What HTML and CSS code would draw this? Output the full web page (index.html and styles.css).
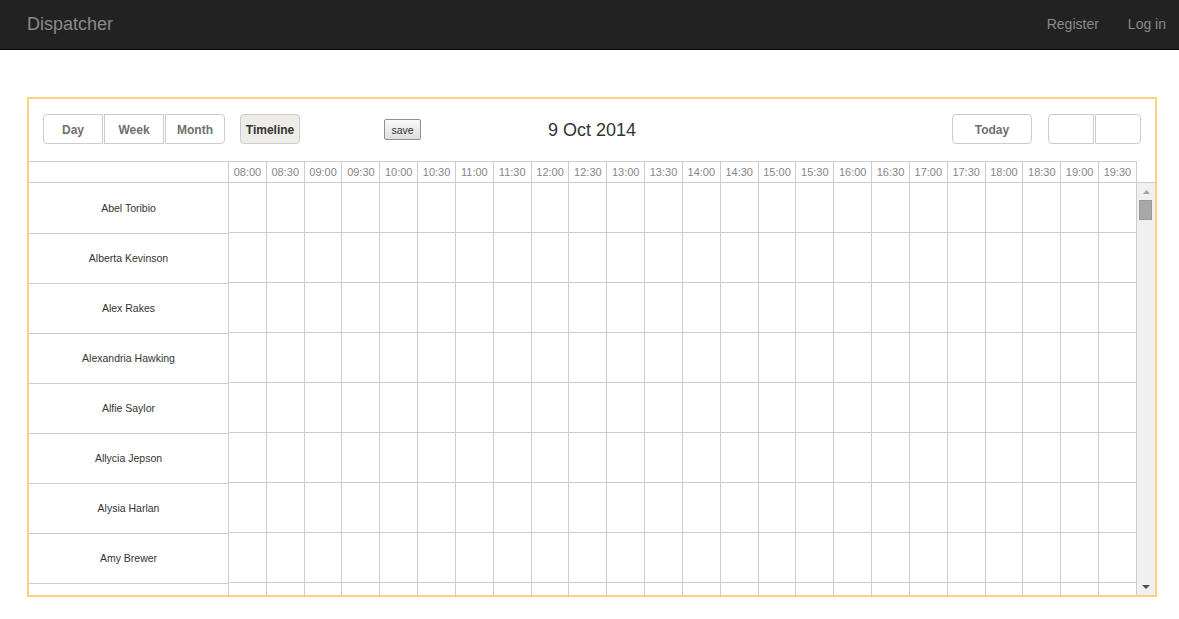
FILE: index.html
```html
<!DOCTYPE html>
<html>
<head>
<meta charset="utf-8">
<title>Dispatcher</title>
<link rel="stylesheet" href="styles.css">
</head>
<body>
<nav class="navbar">
  <a class="brand">Dispatcher</a>
  <div class="nav-links">
    <a>Register</a>
    <a>Log in</a>
  </div>
</nav>
<main class="page">
  <section class="sched">
    <div class="toolbar">
      <div class="tb-left">
        <div class="btn-group">
          <button class="btn first">Day</button>
          <button class="btn">Week</button>
          <button class="btn last">Month</button>
        </div>
        <button class="btn solo active">Timeline</button>
        <button class="save">save</button>
      </div>
      <div class="date">9 Oct 2014</div>
      <div class="tb-right">
        <button class="btn solo today">Today</button>
        <div class="btn-group">
          <button class="btn first nav"></button>
          <button class="btn last nav"></button>
        </div>
      </div>
    </div>
    <div class="tl-header">
      <div class="hdr">
        <div class="hdr-left"></div>
        <div class="hc">08:00</div><div class="hc">08:30</div><div class="hc">09:00</div><div class="hc">09:30</div>
        <div class="hc">10:00</div><div class="hc">10:30</div><div class="hc">11:00</div><div class="hc">11:30</div>
        <div class="hc">12:00</div><div class="hc">12:30</div><div class="hc">13:00</div><div class="hc">13:30</div>
        <div class="hc">14:00</div><div class="hc">14:30</div><div class="hc">15:00</div><div class="hc">15:30</div>
        <div class="hc">16:00</div><div class="hc">16:30</div><div class="hc">17:00</div><div class="hc">17:30</div>
        <div class="hc">18:00</div><div class="hc">18:30</div><div class="hc">19:00</div><div class="hc last">19:30</div>
      </div>
      <div class="hdr-gap"></div>
    </div>
    <div class="tl-body">
      <div class="names">
        <div class="name">Abel Toribio</div>
        <div class="name">Alberta Kevinson</div>
        <div class="name">Alex Rakes</div>
        <div class="name">Alexandria Hawking</div>
        <div class="name">Alfie Saylor</div>
        <div class="name">Allycia Jepson</div>
        <div class="name">Alysia Harlan</div>
        <div class="name">Amy Brewer</div>
        <div class="name"></div>
      </div>
      <div class="grid">
        <div class="col"></div><div class="col"></div><div class="col"></div><div class="col"></div>
        <div class="col"></div><div class="col"></div><div class="col"></div><div class="col"></div>
        <div class="col"></div><div class="col"></div><div class="col"></div><div class="col"></div>
        <div class="col"></div><div class="col"></div><div class="col"></div><div class="col"></div>
        <div class="col"></div><div class="col"></div><div class="col"></div><div class="col"></div>
        <div class="col"></div><div class="col"></div><div class="col"></div><div class="col"></div>
      </div>
      <div class="scrollbar">
        <div class="sb-btn"><svg width="7" height="4" viewBox="0 0 7 4"><polygon points="3.5,0 7,4 0,4" fill="#a3a3a3"/></svg></div>
        <div class="sb-thumb"></div>
        <div class="sb-track"></div>
        <div class="sb-btn"><svg width="8" height="4" viewBox="0 0 8 4"><polygon points="0,0 8,0 4,4" fill="#505050"/></svg></div>
      </div>
    </div>
  </section>
</main>
</body>
</html>
```

FILE: styles.css
```css
* { box-sizing: border-box; }

html, body {
  margin: 0;
  padding: 0;
  background: #fff;
  font-family: "Liberation Sans", Arial, sans-serif;
}

.navbar {
  height: 50px;
  background: #222;
  border-bottom: 1px solid #080808;
  display: flex;
  align-items: center;
  justify-content: space-between;
  padding: 0 13px 1px 27px;
}

.brand {
  font-size: 18px;
  color: #8a8a8a;
}

.nav-links {
  display: flex;
  gap: 29px;
}

.nav-links a {
  font-size: 14px;
  color: #8a8a8a;
}

.page {
  padding: 47px 22px 0 27px;
}

.sched {
  width: 1130px;
  height: 500px;
  border: 2px solid #ffcf83;
  display: flex;
  flex-direction: column;
}

.toolbar {
  height: 62px;
  flex: none;
  padding: 15px 14px 0 14px;
  display: grid;
  grid-template-columns: 1fr auto 1fr;
  align-items: start;
}

.tb-left, .tb-right {
  display: flex;
  align-items: center;
  height: 30px;
}

.tb-right { justify-content: flex-end; }

.btn-group {
  display: flex;
  gap: 1px;
}

.btn {
  height: 30px;
  width: 60px;
  padding: 2px 0 0;
  background: #fff;
  border: 1px solid #ccc;
  border-radius: 0;
  font-family: "Liberation Sans", Arial, sans-serif;
  font-size: 12px;
  font-weight: bold;
  color: #6f6f6f;
}

.btn.first { border-radius: 4px 0 0 4px; }
.btn.last { border-radius: 0 4px 4px 0; }
.btn.solo { border-radius: 4px; }

.btn.active {
  margin-left: 15px;
  background: #eeece6;
  color: #333;
}

.save {
  margin-left: 84px;
  margin-top: 1px;
  width: 37px;
  height: 21px;
  padding: 1px 0 0;
  border: 1px solid #8f8f8f;
  border-radius: 2px;
  background: linear-gradient(#fafafa, #dedede);
  font-family: "Liberation Sans", Arial, sans-serif;
  font-size: 10.5px;
  color: #333;
}

.date {
  height: 30px;
  line-height: 32px;
  font-size: 18px;
  color: #333;
  text-align: center;
}

.btn.today {
  width: 80px;
  margin-right: 16px;
}

.btn.nav { width: 46px; }

.tl-header {
  display: flex;
  flex: none;
}

.hdr {
  width: 1108px;
  display: flex;
  border-top: 1px solid #cdcdcd;
  border-bottom: 1px solid #cdcdcd;
}

.hdr-gap {
  flex: 1;
  border-bottom: 1px solid #cdcdcd;
}

.hdr-left {
  width: 199px;
  flex: none;
}

.hc {
  flex: 1;
  height: 20px;
  line-height: 20px;
  border-left: 1px solid #cdcdcd;
  font-size: 11px;
  color: #858585;
  text-align: center;
}

.hc.last { border-right: 1px solid #cdcdcd; }

.tl-body {
  flex: 1;
  display: flex;
  overflow: hidden;
  min-height: 0;
}

.names {
  width: 199px;
  flex: none;
  padding-top: 1px;
}

.name {
  height: 50px;
  padding-bottom: 2px;
  border-bottom: 1px solid #cdcdcd;
  display: flex;
  align-items: center;
  justify-content: center;
  font-size: 10.5px;
  color: #333;
}

.grid {
  width: 908px;
  flex: none;
  display: flex;
}

.col {
  flex: 1;
  border-left: 1px solid #cdcdcd;
  background: repeating-linear-gradient(to bottom, transparent 0, transparent 49px, #cdcdcd 49px, #cdcdcd 50px);
}

.scrollbar {
  flex: 1;
  border-left: 1px solid #cdcdcd;
  background: #f0f0f0;
  display: flex;
  flex-direction: column;
  align-items: center;
}

.sb-btn {
  height: 17px;
  width: 100%;
  display: flex;
  align-items: center;
  justify-content: center;
  flex: none;
}

.sb-thumb {
  width: 13px;
  height: 20px;
  flex: none;
  background: #a8a8a8;
  border: 1px solid #9a9a9a;
  margin-left: -2px;
}

.sb-track { flex: 1; }
```
